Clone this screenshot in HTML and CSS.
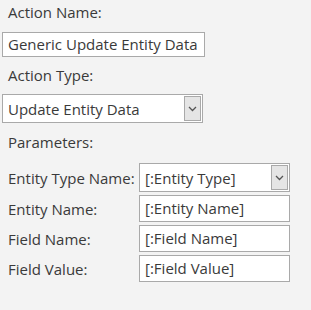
FILE: index.html
```html
<!DOCTYPE html>
<html>
<head>
<meta charset="utf-8">
<link rel="stylesheet" href="styles.css">
</head>
<body>
<div class="form">
  <div class="label first">Action Name:</div>
  <div class="input wide">Generic Update Entity Data</div>
  <div class="label second">Action Type:</div>
  <div class="select wide tall">
    <span class="val">Update Entity Data</span>
    <span class="btn"><svg width="9" height="6" viewBox="0 0 9 6"><path d="M1 1 L4.5 4.5 L8 1" fill="none" stroke="#555" stroke-width="1.3"/></svg></span>
  </div>
  <div class="label params">Parameters:</div>
  <div class="grid">
    <div class="plabel">Entity Type Name:</div>
    <div class="select pctl sel">
      <span class="val">[:Entity Type]</span>
      <span class="btn"><svg width="9" height="6" viewBox="0 0 9 6"><path d="M1 1 L4.5 4.5 L8 1" fill="none" stroke="#555" stroke-width="1.3"/></svg></span>
    </div>
    <div class="plabel">Entity Name:</div>
    <div class="input pctl">[:Entity Name]</div>
    <div class="plabel">Field Name:</div>
    <div class="input pctl">[:Field Name]</div>
    <div class="plabel">Field Value:</div>
    <div class="input pctl">[:Field Value]</div>
  </div>
</div>
</body>
</html>
```

FILE: styles.css
```css
html, body {
  margin: 0;
  padding: 0;
  background: #f3f3f3;
}
body {
  font-family: "Open Sans", "Noto Sans", sans-serif;
  font-size: 15px;
  color: #3a3a3a;
  width: 311px;
  height: 310px;
  overflow: hidden;
}
.form {
  display: flex;
  flex-direction: column;
  padding-top: 1px;
}
.label {
  padding-left: 8px;
  height: 22px;
  line-height: 22px;
}
.first { margin-bottom: 9px; }
.second { margin-top: 7px; margin-bottom: 8px; }
.wide {
  margin-left: 2px;
  width: 203px;
  box-sizing: border-box;
}
.input {
  background: #fff;
  border: 1px solid #a9a9a9;
  height: 25px;
  line-height: 23px;
  padding-left: 5px;
  box-sizing: border-box;
  white-space: nowrap;
}
.select {
  background: #fff;
  border: 1px solid #a9a9a9;
  box-sizing: border-box;
  display: flex;
  align-items: stretch;
  padding: 1px;
}
.select .val {
  flex: 1;
  padding-left: 4px;
  display: flex;
  align-items: center;
}
.select .btn {
  width: 17px;
  box-sizing: border-box;
  background: #e5e5e5;
  border: 1px solid #a9a9a9;
  display: flex;
  align-items: center;
  justify-content: center;
}
.tall {
  height: 29px;
  width: 201px;
  margin-bottom: 8px;
}
.params { margin-bottom: 10px; }
.grid {
  display: grid;
  grid-template-columns: 131px 151px;
  row-gap: 3px;
  padding-left: 8px;
}
.plabel {
  display: flex;
  align-items: center;
  white-space: nowrap;
}
.pctl {
  height: 27px;
  line-height: 25px;
}
.sel {
  height: 29px;
  line-height: normal;
}
```
